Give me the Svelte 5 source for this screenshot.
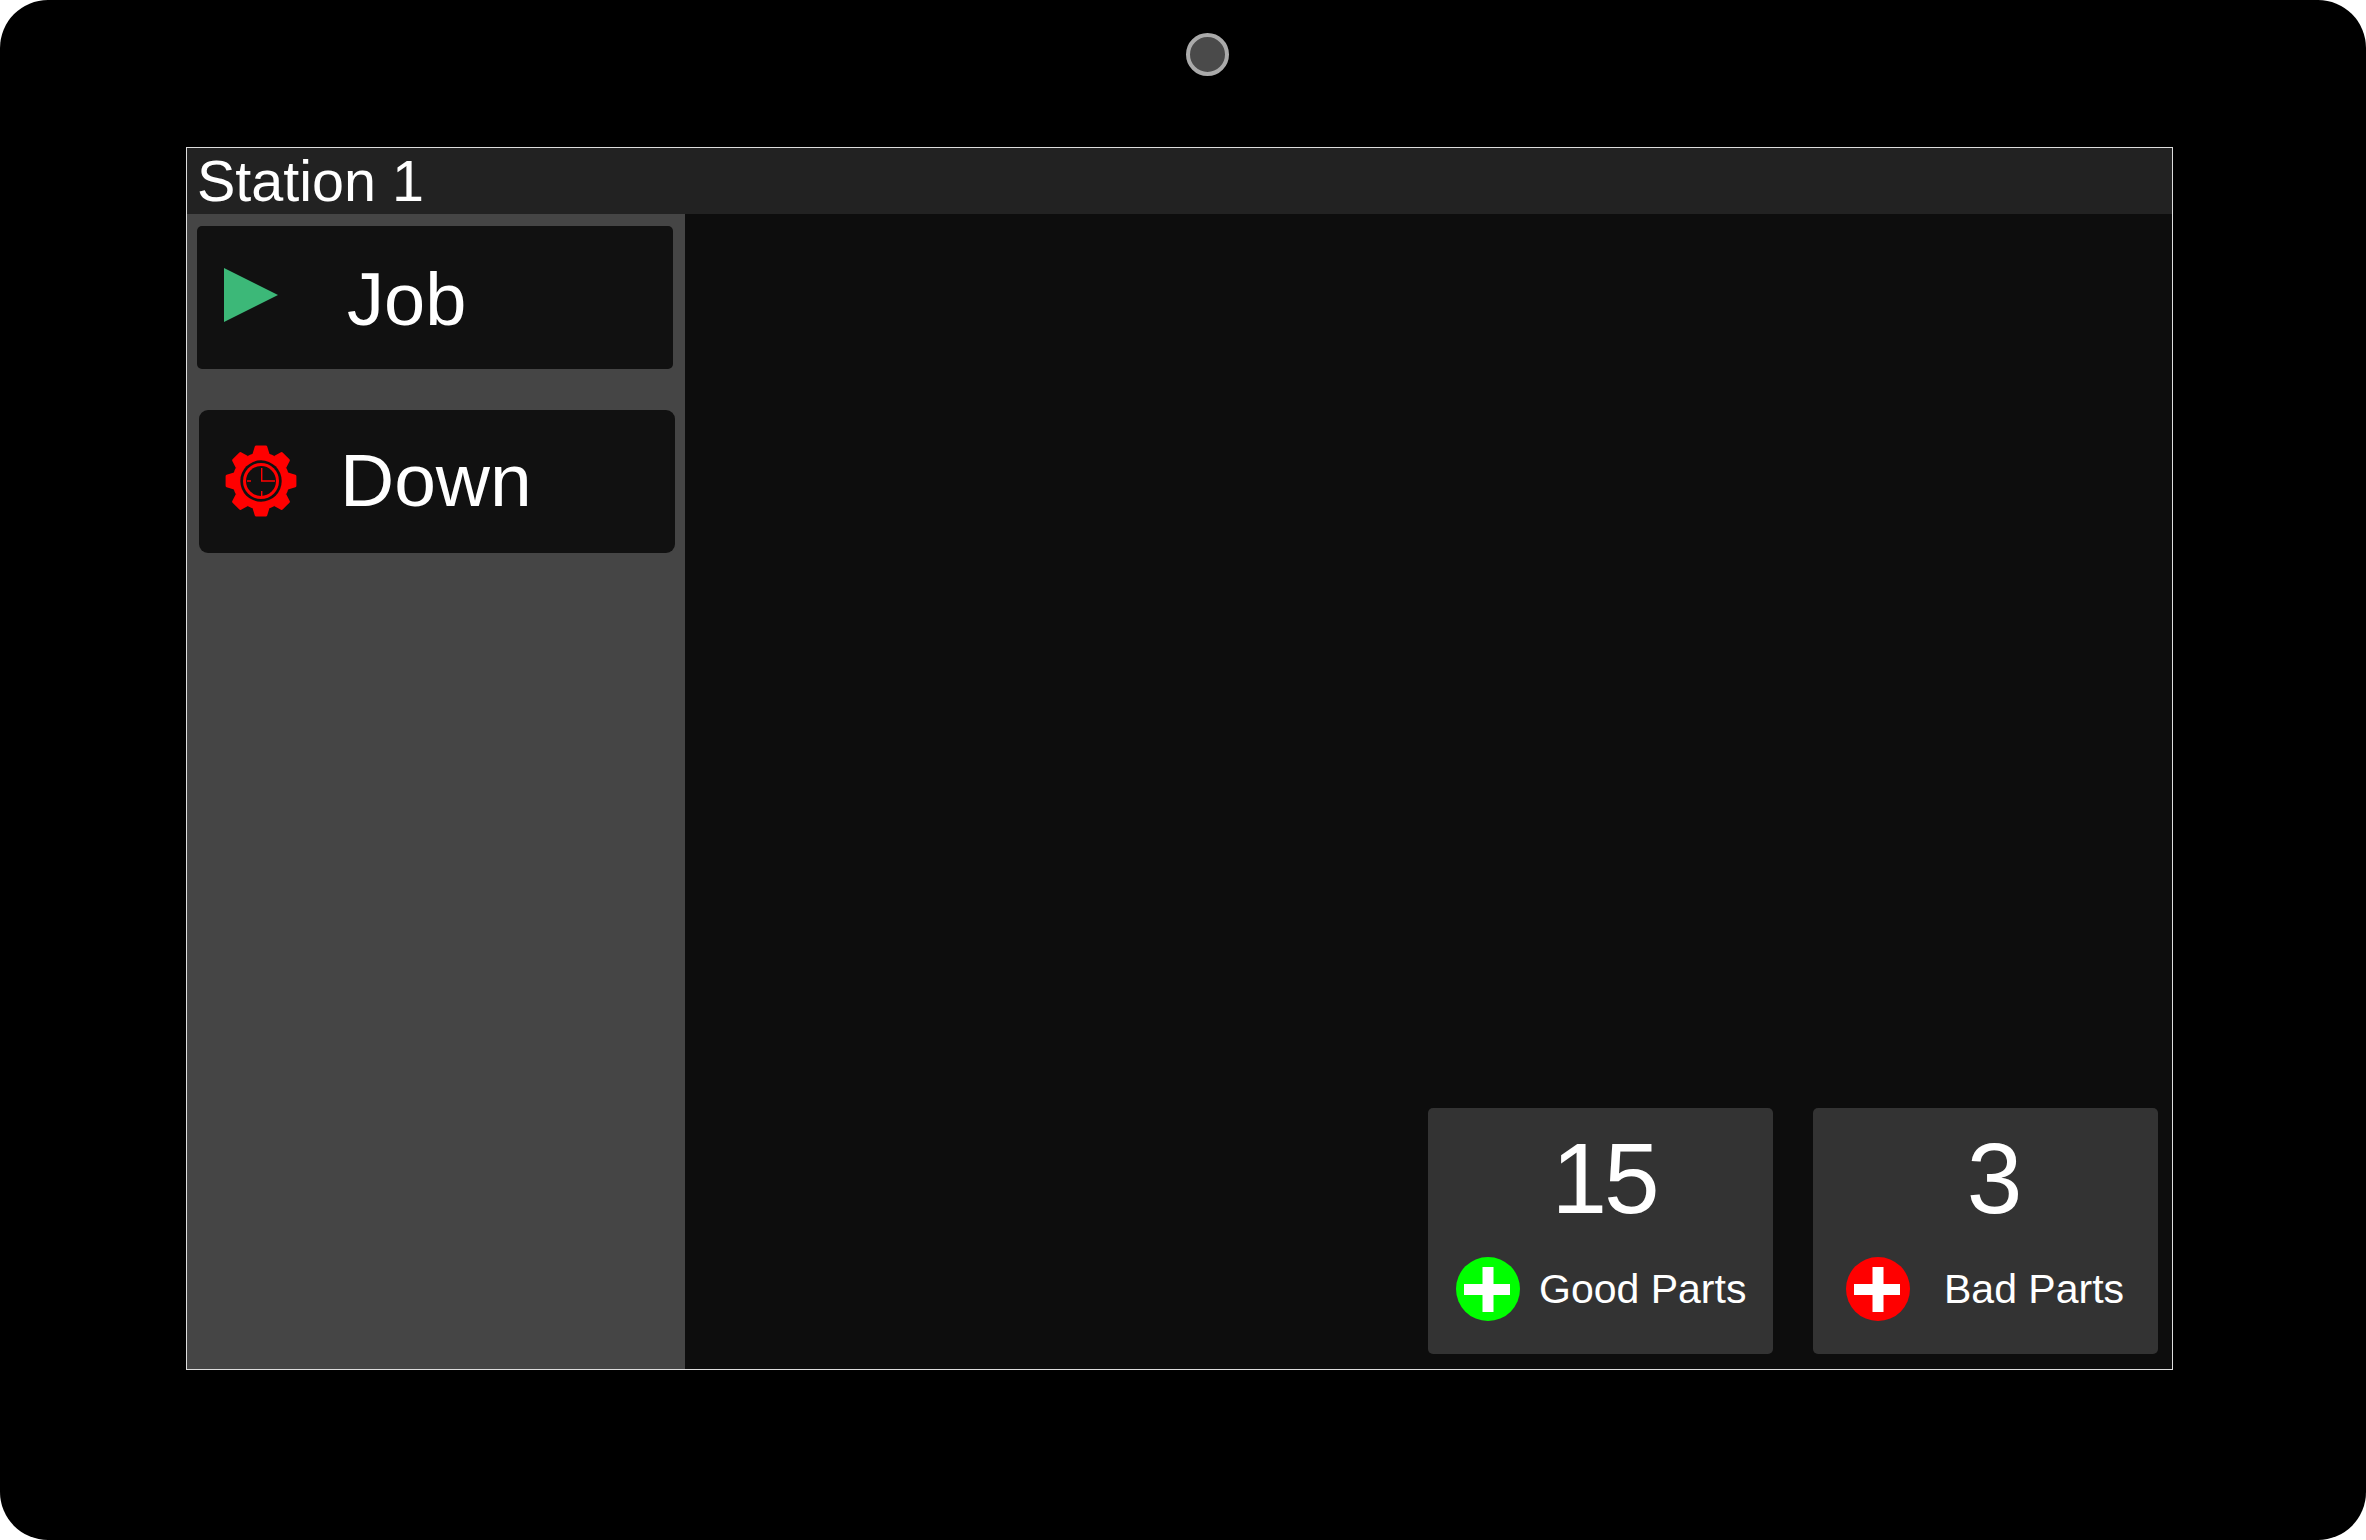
<script>
  const teeth = [0, 45, 90, 135, 180, 225, 270, 315];
  const stats = [
    { value: '15', label: 'Good Parts', tone: 'good' },
    { value: '3', label: 'Bad Parts', tone: 'bad' }
  ];
</script>

<div class="device">
  <div class="camera"></div>
  <div class="screen">
    <header class="title">Station 1</header>
    <div class="body">
      <aside class="side">
        <div class="btn job">
          <svg class="play" width="54" height="54" viewBox="0 0 54 54"><polygon points="0,0 54,27 0,54" fill="#3cb878" /></svg>
          <span>Job</span>
        </div>
        <div class="btn down">
          <svg class="gear" width="72" height="72" viewBox="-36 -36 72 72">
            {#each teeth as a}
              <path d="M-8.5 -27 L-6.2 -34.4 Q-5.9 -35.4 -4.8 -35.4 L4.8 -35.4 Q5.9 -35.4 6.2 -34.4 L8.5 -27 Z" fill="#f00" transform="rotate({a})" />
            {/each}
            <circle r="28.5" fill="#f00" />
            <circle r="20.7" fill="#111" />
            <circle r="18" fill="#f00" />
            <circle r="15" fill="#111" />
            <path d="M0.7 -13 V0 H14 M-14 0 H-10 M0.7 10 V15" fill="none" stroke="#f00" stroke-width="1.4" />
          </svg>
          <span>Down</span>
        </div>
      </aside>
      <main class="main">
        {#each stats as s}
          <section class="stat {s.tone}">
            <div class="value">{s.value}</div>
            <div class="row">
              <svg class="plus" width="64" height="64" viewBox="0 0 64 64">
                <circle cx="32" cy="32" r="32" class="disc" />
                <path d="M26.5 10H37.5V27H54V38H37.5V55H26.5V38H8V27H26.5Z" fill="#fff" />
              </svg>
              <span class="label">{s.label}</span>
            </div>
          </section>
        {/each}
      </main>
    </div>
  </div>
</div>

<style>
  :global(body) { margin: 0; background: #fff; }
  .device {
    width: 2366px;
    height: 1540px;
    box-sizing: border-box;
    background: #000;
    border-radius: 48px;
    padding-top: 33px;
    font-family: "Liberation Sans", Arial, sans-serif;
    color: #fff;
    overflow: hidden;
  }
  .camera {
    width: 43px;
    height: 43px;
    box-sizing: border-box;
    margin-left: 1186px;
    border: 4px solid #aaa;
    border-radius: 50%;
    background: #4a4a4a;
  }
  .screen {
    width: 1987px;
    height: 1223px;
    box-sizing: border-box;
    margin: 71px 0 0 186px;
    border: 1px solid #ddd;
    display: flex;
    flex-direction: column;
    background: #0d0d0d;
  }
  .title {
    height: 66px;
    flex: none;
    background: #222;
    font-size: 57.5px;
    line-height: 66px;
    padding-left: 10px;
    white-space: nowrap;
  }
  .body { flex: 1; display: flex; min-height: 0; }
  .side {
    width: 498px;
    flex: none;
    background: #454545;
    padding-top: 12px;
    box-sizing: border-box;
  }
  .btn {
    width: 476px;
    height: 143px;
    box-sizing: border-box;
    background: #111;
    display: flex;
    align-items: center;
    white-space: nowrap;
  }
  .job { margin-left: 10px; border-radius: 5px; font-size: 74px; }
  .job span { position: relative; top: 2px; }
  .down { margin: 41px 0 0 12px; border-radius: 9px; font-size: 75px; }
  .down span { position: relative; top: -2px; }
  .play { margin-left: 27px; margin-right: 69px; position: relative; top: -3px; }
  .gear { margin-left: 26px; margin-right: 43px; flex: none; position: relative; top: -1px; }
  .main {
    flex: 1;
    display: flex;
    justify-content: flex-end;
    align-items: flex-end;
    gap: 40px;
    padding: 0 14px 15px 0;
  }
  .stat {
    width: 345px;
    height: 246px;
    box-sizing: border-box;
    background: #333;
    border-radius: 5px;
    padding-top: 14px;
  }
  .value {
    font-size: 100px;
    line-height: 112px;
    text-align: center;
    letter-spacing: -3px;
  }
  .good .value { padding-left: 7px; }
  .bad .value { padding-left: 15px; }
  .row { display: flex; align-items: center; margin-top: 23px; }
  .plus { flex: none; }
  .label { font-size: 41px; line-height: 64px; white-space: nowrap; }
  .good .plus { margin: 0 19px 0 28px; }
  .bad .plus { margin: 0 34px 0 33px; }
  .good .disc { fill: #0f0; }
  .bad .disc { fill: #f00; }
</style>
